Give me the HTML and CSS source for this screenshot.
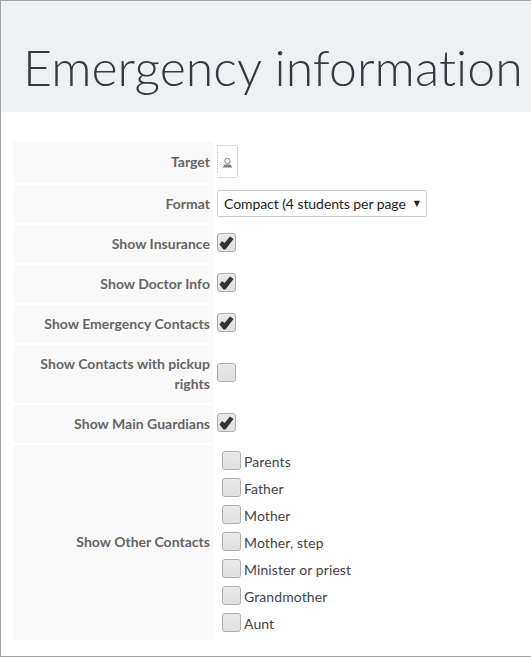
FILE: index.html
```html
<!DOCTYPE html>
<html lang="en">
<head>
<meta charset="utf-8">
<title>Emergency information</title>
<link rel="stylesheet" href="styles.css">
</head>
<body>
<div class="frame">
  <header class="banner"><h1 class="title">Emergency information</h1></header>
  <form class="form">
    <div class="row row-target">
      <div class="label">Target</div>
      <div class="field"><span class="target-box"><span class="target-dots"></span>
        <svg class="target-icon" width="11" height="10" viewBox="0 0 11 10"><circle cx="5.5" cy="3" r="2.7" fill="none" stroke="#8a8a8a" stroke-width="1"/><path d="M0.5 9.6 L2.6 6.6 H8.4 L10.5 9.6 Z" fill="#7d7d7d"/></svg>
      </span></div>
    </div>
    <div class="row row-std row-format">
      <div class="label">Format</div>
      <div class="field"><div class="select"><span class="select-text">Compact (4 students per page</span><span class="arrow">▼</span></div></div>
    </div>
    <div class="row row-std">
      <div class="label">Show Insurance</div>
      <div class="field"><span class="check"><svg width="15" height="14" viewBox="0 0 15 14"><path d="M0.5 8.5 L3 5 L5.5 7 L11 0.5 L14.5 3 L6.5 13.5 L4.5 13.5 Z" fill="#333"/></svg></span></div>
    </div>
    <div class="row row-std">
      <div class="label">Show Doctor Info</div>
      <div class="field"><span class="check"><svg width="15" height="14" viewBox="0 0 15 14"><path d="M0.5 8.5 L3 5 L5.5 7 L11 0.5 L14.5 3 L6.5 13.5 L4.5 13.5 Z" fill="#333"/></svg></span></div>
    </div>
    <div class="row row-std">
      <div class="label">Show Emergency Contacts</div>
      <div class="field"><span class="check"><svg width="15" height="14" viewBox="0 0 15 14"><path d="M0.5 8.5 L3 5 L5.5 7 L11 0.5 L14.5 3 L6.5 13.5 L4.5 13.5 Z" fill="#333"/></svg></span></div>
    </div>
    <div class="row row-tall">
      <div class="label">Show Contacts with pickup rights</div>
      <div class="field"><span class="check"></span></div>
    </div>
    <div class="row row-std">
      <div class="label">Show Main Guardians</div>
      <div class="field"><span class="check"><svg width="15" height="14" viewBox="0 0 15 14"><path d="M0.5 8.5 L3 5 L5.5 7 L11 0.5 L14.5 3 L6.5 13.5 L4.5 13.5 Z" fill="#333"/></svg></span></div>
    </div>
    <div class="row row-list">
      <div class="label label-list">Show Other Contacts</div>
      <div class="field list">
        <div class="option"><span class="check"></span><span class="option-text">Parents</span></div>
        <div class="option"><span class="check"></span><span class="option-text">Father</span></div>
        <div class="option"><span class="check"></span><span class="option-text">Mother</span></div>
        <div class="option"><span class="check"></span><span class="option-text">Mother, step</span></div>
        <div class="option"><span class="check"></span><span class="option-text">Minister or priest</span></div>
        <div class="option"><span class="check"></span><span class="option-text">Grandmother</span></div>
        <div class="option"><span class="check"></span><span class="option-text">Aunt</span></div>
      </div>
    </div>
  </form>
</div>
</body>
</html>
```

FILE: styles.css
```css
* { box-sizing: border-box; }
html, body { margin: 0; padding: 0; background: #fff; }
body { font-family: Lato, sans-serif; font-size: 14px; color: #333; font-variant-ligatures: none; }
.frame {
  width: 531px;
  height: 657px;
  border: 1px solid #a3a3a3;
  border-right: 0;
  overflow: hidden;
}
.banner {
  height: 111px;
  background: #edf1f4;
  padding-top: 35px;
  overflow: hidden;
}
.title {
  margin: 0 0 0 22px;
  font-size: 50px;
  font-weight: 300;
  line-height: 62px;
  color: #343a42;
  white-space: nowrap;
  letter-spacing: 0.05px;
}
.form {
  display: flex;
  flex-direction: column;
  gap: 2px;
  padding: 30px 0 0 12px;
}
.row { display: flex; gap: 4px; }
.row-target { height: 41px; }
.row-std { height: 38px; }
.row-tall { height: 58px; }
.row-list { height: 195px; }
.label {
  width: 200px;
  background: #f9f9f9;
  display: flex;
  align-items: center;
  justify-content: flex-end;
  text-align: right;
  padding: 0 3px 0 20px;
  font-weight: 700;
  color: #666;
  line-height: 20px;
  letter-spacing: 0.02px;
}
.row-target .label, .label-list { padding-bottom: 2px; }
.field { display: flex; align-items: center; }
.target-box {
  width: 21px;
  height: 33px;
  border: 1px solid #d8dce0;
  border-left: 0;
  border-radius: 0 2px 2px 0;
  display: flex;
  align-items: center;
  margin-bottom: 2px;
}
.target-dots {
  align-self: flex-start;
  width: 5px;
  height: 27px;
  border-left: 1px dotted #bbb;
}
.target-icon { margin-top: 2px; }
.select {
  width: 210px;
  height: 27px;
  border: 1px solid #ccc;
  border-radius: 2px;
  background: #fff;
  display: flex;
  align-items: center;
  justify-content: space-between;
  padding: 0 6px 0 6px;
  color: #222;
}
.select-text { white-space: nowrap; letter-spacing: -0.07px; }
.arrow { font-size: 8px; color: #222; font-family: "DejaVu Sans", sans-serif; }
.check {
  width: 19px;
  height: 19px;
  border: 1px solid #aeaeae;
  border-radius: 3px;
  background: linear-gradient(#e9e9e9, #dfdfdf);
  box-shadow: inset 0 0 1px #fff;
  display: flex;
  align-items: center;
  justify-content: center;
  flex: none;
}
.row-std .field, .row-tall .field { padding-bottom: 3px; }
.row-format .field { padding-bottom: 1px; }
.list {
  flex-direction: column;
  align-items: flex-start;
  justify-content: center;
  gap: 8px;
  padding: 0 0 3px 5px;
}
.option {
  display: flex;
  align-items: center;
  gap: 3px;
  height: 19px;
  color: #444;
}
.option-text { padding-top: 2px; letter-spacing: 0.1px; }
```
